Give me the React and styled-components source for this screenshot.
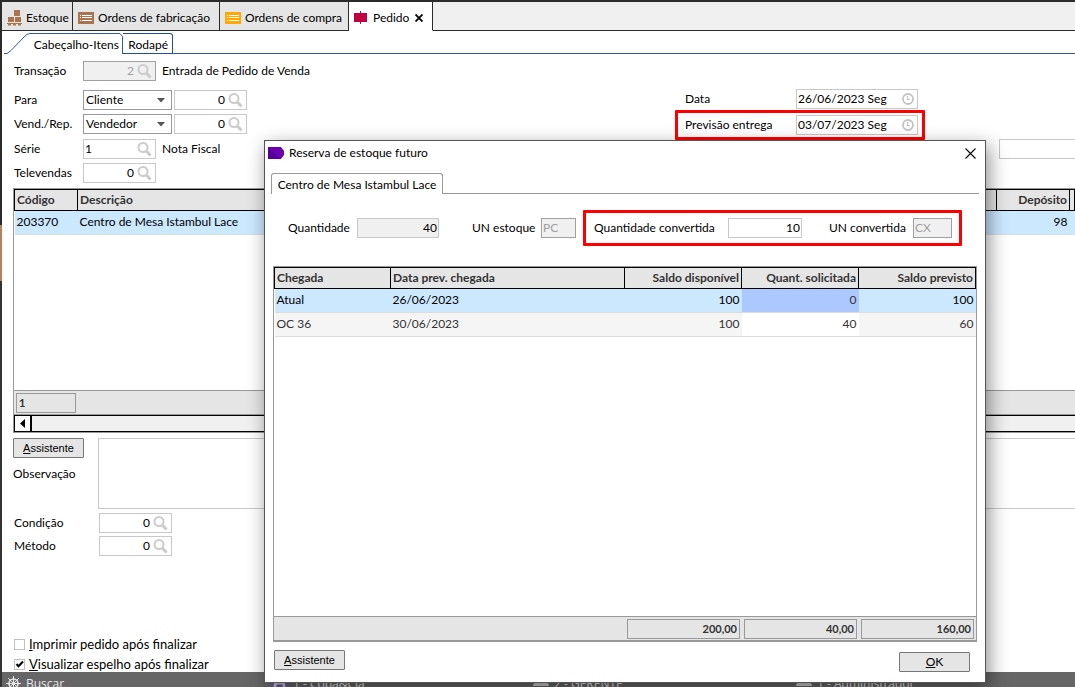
import React, { useState } from 'react';
import styled, { createGlobalStyle } from 'styled-components';

const GlobalStyle = createGlobalStyle`
  * {
    box-sizing: border-box;
  }
  body {
    margin: 0;
    background: #fff;
  }
  body, input, select, textarea, button, table {
    font-family: Lato, 'Open Sans', sans-serif;
    font-size: 12px;
    line-height: 16px;
    color: #000;
  }
`;

const Shell = styled.div`
  position: relative;
  min-height: 100vh;
  display: flex;
  flex-direction: column;
  padding: 2px 0 0 2px;
  background: linear-gradient(#2b2b2b 0 225px, #b5805c 225px 281px, #333 281px);
  overflow: hidden;
`;

const Page = styled.main`
  flex: 1;
  display: flex;
  flex-direction: column;
  background: #fff;
`;

const Tabs = styled.nav`
  display: flex;
  height: 29px;
  background: #f0f0f0;
`;

const Tab = styled.button`
  display: flex;
  align-items: center;
  gap: ${({ $active }) => ($active ? 6 : 4)}px;
  padding: 4px 3px 0 5px;
  width: ${({ $width }) => $width}px;
  white-space: nowrap;
  border: 0;
  border-right: 1px solid #2b2b2b;
  border-bottom: 1px solid ${({ $active }) => ($active ? '#fff' : '#2b2b2b')};
  background: ${({ $active }) => ($active ? '#fff' : '#e5e5e5')};
  svg {
    flex: none;
  }
`;

const TabsRest = styled.div`
  flex: 1;
  border-bottom: 1px solid #2b2b2b;
`;

const SubTabs = styled.nav`
  display: flex;
  height: 23px;
  padding-top: 2px;
`;

const SubTab = styled.button`
  position: relative;
  display: flex;
  align-items: center;
  justify-content: flex-end;
  width: ${({ $width }) => $width}px;
  padding: 2px 4px 0;
  white-space: nowrap;
  background: none;
  border: 1px solid #1f4e9e;
  border-width: ${({ $slanted }) => ($slanted ? '0' : '1px 1px 1px 0')};
  border-radius: 0 3px 0 0;
  svg {
    position: absolute;
    left: 0;
    top: 0;
  }
`;

const SubRest = styled.div`
  flex: 1;
  border-bottom: 1px solid #2f5c9e;
`;

const Header = styled.div`
  display: grid;
  grid-template-columns: minmax(0, 1fr) 250px 74px 76px;
  padding-top: 7px;
  height: 134px;
`;

const Column = styled.div`
  display: flex;
  flex-direction: column;
  gap: 4px;
  padding-left: 12px;
`;

const DateColumn = styled.div`
  display: flex;
  flex-direction: column;
  padding-top: 28px;
`;

const Row = styled.div`
  display: flex;
  align-items: center;
  height: 20px;
  gap: 2px;
  margin-bottom: ${({ $space }) => $space || 0}px;
`;

const Label = styled.label`
  width: ${({ $width }) => ($width ? `${$width}px` : 'auto')};
  white-space: nowrap;
`;

const Caption = styled.span`
  padding-left: 4px;
  white-space: nowrap;
`;

const Box = styled.span`
  display: flex;
  align-items: center;
  flex: none;
  gap: 2px;
  width: ${({ $width }) => $width}px;
  height: 20px;
  padding-right: ${({ $icon }) => ($icon ? 3 : 0)}px;
  border: 1px solid ${({ $disabled }) => ($disabled ? '#a0a0a0' : '#c8c8c8')};
  background: ${({ $disabled, $muted }) => ($disabled || $muted ? '#f0f0f0' : '#fff')};
  svg {
    flex: none;
  }
`;

const Input = styled.input`
  flex: 1;
  min-width: 0;
  height: 18px;
  padding: 0 1px 2px;
  border: 0;
  outline: 0;
  background: none;
  text-align: ${({ $align }) => $align || 'right'};
  &:disabled {
    color: #a0a0a0;
  }
`;

const SelectBox = styled.span`
  display: flex;
  align-items: center;
  width: 89px;
  height: 20px;
  padding-right: 6px;
  border: 1px solid #999;
`;

const Select = styled.select`
  flex: 1;
  min-width: 0;
  height: 18px;
  padding: 0 2px;
  border: 0;
  appearance: none;
  background: none;
`;

const Highlight = styled.div`
  display: flex;
  align-items: center;
  border: 3px solid #f00;
  border-radius: 1px;
  padding: ${({ $padding }) => $padding};
`;

const DateRow = styled.div`
  display: flex;
  align-items: center;
  padding-left: 10px;
  margin-bottom: 1px;
`;

const ExtraField = styled.input`
  align-self: start;
  min-width: 0;
  height: 20px;
  margin-top: 78px;
  border: 1px solid #c8c8c8;
  border-right: 0;
`;

const ItemsGrid = styled.section`
  display: flex;
  flex-direction: column;
  height: 245px;
  margin-left: 11px;
  border: 1px solid #999;
  border-right: 0;
`;

const Table = styled.table`
  width: 100%;
  border-collapse: collapse;
  table-layout: fixed;
`;

const Th = styled.th`
  height: 21px;
  padding: 0 2px;
  border: 1px solid #000;
  background: #e5e5e5;
  color: #333;
  font-weight: 700;
  text-align: ${({ $right }) => ($right ? 'right' : 'left')};
  white-space: nowrap;
`;

const Td = styled.td`
  height: 24px;
  padding: 0 2px 1px;
  border-bottom: 1px solid #dcdcdc;
  background: ${({ $bg }) => $bg || '#cce8ff'};
  color: ${({ $dim }) => ($dim ? '#333' : '#000')};
  text-align: ${({ $right }) => ($right ? 'right' : 'left')};
  white-space: nowrap;
`;

const Fill = styled.div`
  flex: 1;
`;

const GridFooter = styled.div`
  display: flex;
  align-items: center;
  justify-content: ${({ $end }) => ($end ? 'flex-end' : 'flex-start')};
  gap: 4px;
  height: 25px;
  padding: 0 2px;
  border: 1px solid #999;
  border-width: 1px 0;
  background: #e5e5e5;
`;

const Total = styled.output`
  width: ${({ $width }) => $width}px;
  height: 20px;
  padding: 1px 2px;
  border: 1px solid #999;
  color: #333;
  font-size: 11px;
  font-weight: 700;
  text-align: ${({ $left }) => ($left ? 'left' : 'right')};
`;

const Scrollbar = styled.div`
  display: flex;
  height: 17px;
  border: 1px solid #000;
  border-right: 0;
  background: #f0f0f0;
`;

const ScrollArrow = styled.button`
  display: grid;
  place-items: center;
  width: 17px;
  padding: 0;
  border: 0;
  border-right: 2px solid #000;
  background: #fff;
`;

const Notes = styled.div`
  display: grid;
  grid-template-columns: 85px 1fr;
  padding: 5px 0 0 11px;
`;

const NotesSide = styled.div`
  display: flex;
  flex-direction: column;
  gap: 8px;
`;

const NotesArea = styled.textarea`
  height: 71px;
  border: 1px solid #c8c8c8;
  border-right: 0;
  resize: none;
`;

const Button = styled.button`
  width: 71px;
  height: 20px;
  padding: 0;
  border: 1px solid #777;
  border-radius: 1px;
  background: #e5e5e5;
  font-family: ${({ $plain }) => ($plain ? 'Lato' : "'Liberation Sans'")}, sans-serif;
  font-size: ${({ $plain }) => ($plain ? 12 : 11)}px;
`;

const Terms = styled.div`
  display: flex;
  flex-direction: column;
  gap: 3px;
  padding: 4px 0 0 12px;
`;

const Options = styled.div`
  display: flex;
  flex-direction: column;
  gap: 4px;
  margin-top: auto;
  padding-left: 12px;
`;

const Option = styled.label`
  display: flex;
  align-items: center;
  gap: 4px;
  height: 16px;
  font-size: 13px;
`;

const Check = styled.input`
  appearance: none;
  width: 11px;
  height: 11px;
  margin: 0;
  border: 1px solid #c0c0c0;
  background: #fff;
  &:checked {
    background: #fff url("data:image/svg+xml,%3Csvg xmlns='http://www.w3.org/2000/svg' viewBox='0 0 9 9'%3E%3Cpath d='M1.5 4l2 2.3L8 1.5' fill='none' stroke='black' stroke-width='2'/%3E%3C/svg%3E");
  }
`;

const StatusBar = styled.footer`
  display: grid;
  grid-template-columns: 265px 262px 263px 1fr;
  height: 15px;
  overflow: hidden;
  background: #666;
  color: #e8e8e8;
  font-family: 'Open Sans', sans-serif;
`;

const Status = styled.span`
  display: flex;
  gap: 5px;
  align-items: flex-start;
  padding: 4px 0 0 4px;
  white-space: nowrap;
`;

const Dialog = styled.section`
  position: absolute;
  top: 140px;
  left: 264px;
  right: 89px;
  padding: 0 6px 10px;
  border: 1px solid #555;
  background: #fff;
  box-shadow: 3px 6px 18px rgba(0, 0, 0, 0.45);
`;

const TitleBar = styled.header`
  display: flex;
  align-items: center;
  gap: 5px;
  height: 24px;
  margin: 0 3px 0 -3px;
`;

const Title = styled.h1`
  flex: 1;
  margin: 0;
  font-size: 12px;
  font-weight: 400;
`;

const Close = styled.button`
  display: grid;
  place-items: center;
  padding: 0;
  border: 0;
  background: none;
`;

const DialogTabs = styled.div`
  display: flex;
  padding-top: 8px;
`;

const DialogTab = styled.button`
  width: 172px;
  height: 21px;
  padding: 2px 0 0;
  border: 1px solid #999;
  border-bottom: 0;
  border-radius: 3px 3px 0 0;
  background: #fff;
  white-space: nowrap;
`;

const DialogRest = styled.div`
  flex: 1;
  border-bottom: 1px solid #999;
`;

const Fields = styled.div`
  display: flex;
  align-items: center;
  justify-content: space-between;
  margin: 16px 17px 20px;
`;

const StockFields = styled.div`
  display: flex;
  gap: 33px;
`;

const Pair = styled.div`
  display: flex;
  align-items: center;
  justify-content: space-between;
  width: ${({ $width }) => $width}px;
`;

const ConvertedBox = styled(Highlight)`
  justify-content: space-between;
  width: 379px;
  height: 36px;
`;

const ReserveGrid = styled.div`
  display: flex;
  flex-direction: column;
  height: 376px;
  margin: 0 2px;
  border: 1px solid #999;
`;

const Actions = styled.footer`
  display: flex;
  justify-content: space-between;
  height: 30px;
  padding: 8px 9px 0 3px;
  button:last-child {
    align-self: flex-end;
  }
`;

const Search = () => (
  <svg width="15" height="15" viewBox="0 0 15 15" fill="none" stroke="#ccc">
    <circle cx="6" cy="5.5" r="4.5" strokeWidth="2" />
    <path d="M9.3 9l4.2 4.5" strokeWidth="3" />
  </svg>
);

const Clock = () => (
  <svg width="12" height="12" viewBox="0 0 12 12" fill="none" stroke="#c4c4c4">
    <circle cx="6" cy="6" r="5" strokeWidth="1.8" />
    <path d="M5.5 3v3.5H8" strokeWidth="1.2" />
  </svg>
);

const Boxes = () => (
  <svg width="15" height="16" viewBox="0 0 15 16" fill="#a97450">
    <path d="M7 0h6v6H7zM1 7h6v5H1zM8 7h6v5H8zM0 13h15v1H0zM1 14h3v1.5H1zM6 14h3v1.5H6zM11 14h3v1.5h-3z" />
  </svg>
);

const ListIcon = ({ color }) => (
  <svg width="16" height="12" viewBox="0 0 16 12">
    <path fill={color} d="M0 0h16v12H0z" />
    <path stroke="#fff" d="M2 3.5h1m1 0h10M2 5.5h1m1 0h10M2 8.5h1m1 0h10" />
  </svg>
);

const OrderIcon = () => (
  <svg width="13" height="14" viewBox="0 0 13 14" fill="#c00040">
    <path d="M0 2h13v9H0zM6 0h1v13H6z" />
  </svg>
);

const Helm = () => (
  <svg width="15" height="15" viewBox="0 0 15 15" fill="none" stroke="#e8e8e8">
    <circle cx="7.5" cy="7.5" r="4.5" strokeWidth="1.6" />
    <circle cx="7.5" cy="7.5" r="1.3" />
    <path d="M7.5 0v15M0 7.5h15M2.2 2.2l10.6 10.6M12.8 2.2L2.2 12.8" />
  </svg>
);

const Company = () => (
  <svg width="17" height="14" viewBox="0 0 17 14">
    <path d="M0 0h17v14H0z" fill="#6a5aa0" />
    <path d="M4 12V9q0-2 4.500-2t4.500 2v3" fill="none" stroke="#ccc" strokeWidth="2.5" />
  </svg>
);

const People = () => (
  <svg width="16" height="12" viewBox="0 0 16 12" fill="#ccc">
    <circle cx="5" cy="3" r="2.5" />
    <circle cx="11" cy="3" r="2.5" />
    <path d="M0 10q0-4 5-4 3 0 3 2 0-2 3-2 5 0 5 4z" />
  </svg>
);

const Field = ({ id, name, value, width = 73, icon, align, disabled, muted }) => (
  <Box $width={width} $icon={!!icon} $disabled={disabled} $muted={muted}>
    <Input id={id} aria-label={name} defaultValue={value} $align={align} disabled={disabled} readOnly={muted} />
    {icon}
  </Box>
);

const Combo = ({ id, options }) => (
  <SelectBox>
    <Select id={id} defaultValue={options[0]}>
      {options.map((o) => (
        <option key={o}>{o}</option>
      ))}
    </Select>
    <svg width="8" height="5" viewBox="0 0 8 5" fill="#555">
      <path d="M0 0h8L4 4.5z" />
    </svg>
  </SelectBox>
);

const arrivals = [
  { origin: 'Atual', date: '26/06/2023', available: 100, requested: 0, expected: 100 },
  { origin: 'OC 36', date: '30/06/2023', available: 100, requested: 40, expected: 60 },
];

const ReserveDialog = ({ onClose }) => (
  <Dialog role="dialog" aria-labelledby="reserve-title">
    <TitleBar>
      <svg width="16" height="12" viewBox="0 0 16 12">
        <path d="M0 0h13l3 4v4l-3 4H0z" fill="#6a00b0" />
        <path d="M0 0l12 12H0z" fill="#55009a" />
      </svg>
      <Title id="reserve-title">Reserva de estoque futuro</Title>
      <Close aria-label="Fechar" onClick={onClose}>
        <svg width="11" height="11" viewBox="0 0 11 11" stroke="#000" strokeWidth="1.1">
          <path d="M.5.5l10 10M10.5.5l-10 10" />
        </svg>
      </Close>
    </TitleBar>
    <DialogTabs>
      <DialogTab>Centro de Mesa Istambul Lace</DialogTab>
      <DialogRest />
    </DialogTabs>
    <Fields>
      <StockFields>
        <Pair $width={151}>
          <Label htmlFor="qty">Quantidade</Label>
          <Field id="qty" value="40" width={82} muted />
        </Pair>
        <Pair $width={104}>
          <Label htmlFor="un">UN estoque</Label>
          <Field id="un" value="PC" width={35} align="left" disabled />
        </Pair>
      </StockFields>
      <ConvertedBox $padding="0 7px 0 8px">
        <Pair $width={208}>
          <Label htmlFor="qty-conv">Quantidade convertida</Label>
          <Field id="qty-conv" value="10" width={74} />
        </Pair>
        <Pair $width={123}>
          <Label htmlFor="un-conv">UN convertida</Label>
          <Field id="un-conv" value="CX" width={39} align="left" disabled />
        </Pair>
      </ConvertedBox>
    </Fields>
    <ReserveGrid>
      <Table>
        <colgroup>
          <col width="116" />
          <col />
          <col width="117" />
          <col width="117" />
          <col width="117" />
        </colgroup>
        <thead>
          <tr>
            <Th>Chegada</Th>
            <Th>Data prev. chegada</Th>
            <Th $right>Saldo disponível</Th>
            <Th $right>Quant. solicitada</Th>
            <Th $right>Saldo previsto</Th>
          </tr>
        </thead>
        <tbody>
          {arrivals.map((a, i) => {
            const bg = i ? '#f5f5f5' : '#cce8ff';
            return (
              <tr key={a.origin}>
                <Td $bg={bg} $dim={i > 0}>{a.origin}</Td>
                <Td $bg={bg} $dim={i > 0}>{a.date}</Td>
                <Td $bg={bg} $dim={i > 0} $right>{a.available}</Td>
                <Td $bg={i ? '#fff' : '#adc8ff'} $dim $right>{a.requested}</Td>
                <Td $bg={bg} $dim={i > 0} $right>{a.expected}</Td>
              </tr>
            );
          })}
        </tbody>
      </Table>
      <Fill />
      <GridFooter $end>
        <Total $width={113}>200,00</Total>
        <Total $width={113}>40,00</Total>
        <Total $width={113}>160,00</Total>
      </GridFooter>
    </ReserveGrid>
    <Actions>
      <Button><u>A</u>ssistente</Button>
      <Button $plain><u>O</u>K</Button>
    </Actions>
  </Dialog>
);

const App = () => {
  const [open, setOpen] = useState(true);

  return (
    <Shell>
      <GlobalStyle />
      <Page>
        <Tabs>
          <Tab $width={71}><Boxes />Estoque</Tab>
          <Tab $width={147}><ListIcon color="#a97450" />Ordens de fabricação</Tab>
          <Tab $width={129}><ListIcon color="#ffa800" />Ordens de compra</Tab>
          <Tab $width={84} $active>
            <OrderIcon />
            Pedido
            <svg width="8" height="8" viewBox="0 0 8 8" stroke="#000" strokeWidth="1.8">
              <path d="M.5.5l7 7M7.5.5l-7 7" />
            </svg>
          </Tab>
          <TabsRest />
        </Tabs>
        <SubTabs>
          <SubTab $width={121} $slanted>
            <svg width="121" height="21" viewBox="0 0 121 21" fill="none" stroke="#2f5c9e">
              <path d="M2 20.5h3l4-3L22 4Q25 .5 28 .5h90l2.500 3V21" />
            </svg>
            Cabeçalho-Itens
          </SubTab>
          <SubTab $width={50}>Rodapé</SubTab>
          <SubRest />
        </SubTabs>
        <Header>
          <Column>
            <Row $space={5}>
              <Label $width={67} htmlFor="trans">Transação</Label>
              <Field id="trans" value="2" icon={<Search />} disabled />
              <Caption>Entrada de Pedido de Venda</Caption>
            </Row>
            <Row>
              <Label $width={67} htmlFor="para">Para</Label>
              <Combo id="para" options={['Cliente', 'Fornecedor']} />
              <Field name="Código do cliente" value="0" icon={<Search />} />
            </Row>
            <Row $space={1}>
              <Label $width={67} htmlFor="vend">Vend./Rep.</Label>
              <Combo id="vend" options={['Vendedor', 'Representante']} />
              <Field name="Código do vendedor" value="0" icon={<Search />} />
            </Row>
            <Row>
              <Label $width={67} htmlFor="serie">Série</Label>
              <Field id="serie" value="1" align="left" icon={<Search />} />
              <Caption>Nota Fiscal</Caption>
            </Row>
            <Row>
              <Label $width={67} htmlFor="tele">Televendas</Label>
              <Field id="tele" value="0" icon={<Search />} />
            </Row>
          </Column>
          <DateColumn>
            <DateRow>
              <Label $width={111} htmlFor="data">Data</Label>
              <Field id="data" value="26/06/2023 Seg" width={122} align="left" icon={<Clock />} />
            </DateRow>
            <Highlight $padding="2px 0 2px 7px">
              <Label $width={111} htmlFor="entrega">Previsão entrega</Label>
              <Field id="entrega" value="03/07/2023 Seg" width={122} align="left" icon={<Clock />} />
            </Highlight>
          </DateColumn>
          <span />
          <ExtraField aria-label="Complemento" />
        </Header>
        <ItemsGrid>
          <Table>
            <colgroup>
              <col width="63" />
              <col />
              <col width="73" />
              <col width="5" />
            </colgroup>
            <thead>
              <tr>
                <Th>Código</Th>
                <Th>Descrição</Th>
                <Th $right>Depósito</Th>
                <Th />
              </tr>
            </thead>
            <tbody>
              <tr>
                <Td>203370</Td>
                <Td>Centro de Mesa Istambul Lace</Td>
                <Td $right>98</Td>
                <Td />
              </tr>
            </tbody>
          </Table>
          <Fill />
          <GridFooter>
            <Total $width={60} $left>1</Total>
          </GridFooter>
          <Scrollbar>
            <ScrollArrow aria-label="Rolar para a esquerda">
              <svg width="5" height="9" viewBox="0 0 5 9">
                <path d="M5 0v9L0 4.500z" />
              </svg>
            </ScrollArrow>
          </Scrollbar>
        </ItemsGrid>
        <Notes>
          <NotesSide>
            <Button><u>A</u>ssistente</Button>
            <Label htmlFor="obs">Observação</Label>
          </NotesSide>
          <NotesArea id="obs" />
        </Notes>
        <Terms>
          <Row>
            <Label $width={83} htmlFor="cond">Condição</Label>
            <Field id="cond" value="0" icon={<Search />} />
          </Row>
          <Row>
            <Label $width={83} htmlFor="metodo">Método</Label>
            <Field id="metodo" value="0" icon={<Search />} />
          </Row>
        </Terms>
        <Options>
          <Option>
            <Check type="checkbox" />
            <span><u>I</u>mprimir pedido após finalizar</span>
          </Option>
          <Option>
            <Check type="checkbox" defaultChecked />
            <span><u>V</u>isualizar espelho após finalizar</span>
          </Option>
        </Options>
        <StatusBar>
          <Status><Helm />Buscar</Status>
          <Status><Company />1 - Copa&amp;Cia</Status>
          <Status><People />2 - GERENTE</Status>
          <Status><People />1 - Administrador</Status>
        </StatusBar>
      </Page>
      {open && <ReserveDialog onClose={() => setOpen(false)} />}
    </Shell>
  );
};

export default App;
